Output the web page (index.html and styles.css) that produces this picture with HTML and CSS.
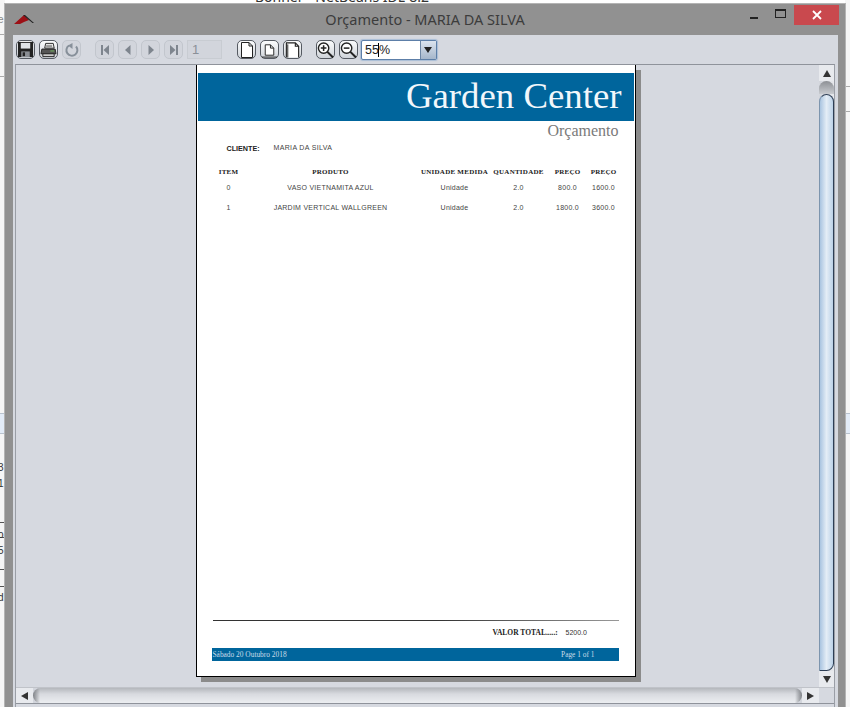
FILE: index.html
```html
<!DOCTYPE html>
<html lang="pt">
<head>
  <meta charset="utf-8">
  <title>Orçamento - MARIA DA SILVA</title>
  <link rel="stylesheet" href="styles.css">
</head>
<body>
  <!-- what shows of the IDE behind the dialog -->
  <div class="behind-title">Bonner - NetBeans IDE 8.2</div>
  <div class="strip strip-l"></div>
  <div class="strip strip-r"></div>
  <div class="behind-band behind-band-l"></div>
  <div class="behind-band behind-band-r"></div>
  <div class="line line-l l34"></div>
  <div class="line line-l l76"></div>
  <div class="line line-l l522"></div>
  <div class="line line-l l537"></div>
  <div class="line line-l l569"></div>
  <div class="line line-l l586"></div>
  <div class="line line-r r86"></div>
  <div class="line line-r r111"></div>
  <div class="behind-txt t14">e</div>
  <div class="behind-txt t462">3</div>
  <div class="behind-txt t478">1</div>
  <div class="behind-txt t529">o</div>
  <div class="behind-txt t545">5</div>
  <div class="behind-txt t592">d</div>

  <div class="window">
    <div class="titlebar">
      <svg class="app-icon" width="20" height="12" viewBox="0 0 20 12">
        <path d="M0 11 L10 2 L15 7 L10 9 L6 11 Z" fill="#9c1016"/>
        <path d="M9 2 L11 2 L20 10 L18.500 10 Z" fill="#222"/>
      </svg>
      <div class="win-title">Orçamento - MARIA DA SILVA</div>
      <div class="win-btns">
        <div class="win-btn"><span class="ico-min"></span></div>
        <div class="win-btn"><span class="ico-max"></span></div>
        <div class="win-close">
          <svg width="12" height="12" viewBox="0 0 12 12"><path d="M2 2 L10 10 M10 2 L2 10" stroke="#fff" stroke-width="1.800"/></svg>
        </div>
      </div>
    </div>

    <div class="content">
      <div class="toolbar">
        <div class="tb on">
          <svg width="17" height="17" viewBox="0 0 18 18"><path d="M1 1 H17 V17 H1 Z" fill="#222"/><rect x="4" y="2" width="10" height="6" fill="#dfe2e6"/><rect x="4.500" y="11" width="9" height="6" fill="#8a8e94"/><rect x="6" y="12" width="2.500" height="4" fill="#222"/></svg>
        </div>
        <div class="tb on">
          <svg width="18" height="18" viewBox="0 0 18 18"><path d="M6 2 H14 L15 7 H5 Z" fill="#fff" stroke="#222"/><path d="M6.500 4 H13 M6.500 5.500 H13" stroke="#555" stroke-width=".8"/><path d="M2 8 H16 L17 13 H1 Z" fill="#555" stroke="#222"/><path d="M11 10 H15" stroke="#6a9a5a" stroke-width="1.500"/><path d="M3 13 H15 V16 H3 Z" fill="#ccc" stroke="#222"/></svg>
        </div>
        <div class="tb off">
          <svg width="16" height="16" viewBox="0 0 16 16"><path d="M5 3.500 A5.500 5.500 0 1 0 12 4.500" fill="none" stroke="#87909a" stroke-width="2"/><path d="M8.500 1 V7 L4 3.500 Z" fill="#87909a"/></svg>
        </div>
        <div class="tb off gap-l">
          <svg width="12" height="12" viewBox="0 0 12 12"><path d="M2 1 H4 V11 H2 Z M10 1 V11 L4.500 6 Z" fill="#7e858e"/></svg>
        </div>
        <div class="tb off">
          <svg width="12" height="12" viewBox="0 0 12 12"><path d="M8.500 1 V11 L3 6 Z" fill="#7e858e"/></svg>
        </div>
        <div class="tb off">
          <svg width="12" height="12" viewBox="0 0 12 12"><path d="M3.500 1 V11 L9 6 Z" fill="#7e858e"/></svg>
        </div>
        <div class="tb off">
          <svg width="12" height="12" viewBox="0 0 12 12"><path d="M2 1 V11 L7.500 6 Z M8 1 H10 V11 H8 Z" fill="#7e858e"/></svg>
        </div>
        <div class="page-num">1</div>
        <div class="tb on gap-p">
          <svg width="16" height="18" viewBox="0 0 16 18"><path d="M2.500 1.500 H10 L13.500 5 V16.500 H2.500 Z M10 1.500 V5 H13.500" fill="#fff" stroke="#222"/></svg>
        </div>
        <div class="tb on">
          <svg width="18" height="18" viewBox="0 0 18 18"><path d="M4.500 3.500 H10 L13.500 7 V14.500 H4.500 Z M10 3.500 V7 H13.500" fill="#fff" stroke="#222"/><path d="M1 16.500 H17" stroke="#222"/></svg>
        </div>
        <div class="tb on">
          <svg width="18" height="18" viewBox="0 0 18 18"><path d="M2.500 17 V1.500 H12 L15.500 5 V17 M12 1.500 V5 H15.500" fill="#fff" stroke="#222" stroke-width="1.200"/><path d="M4 17 V3" stroke="#222"/></svg>
        </div>
        <div class="tb on gap-z">
          <svg width="18" height="18" viewBox="0 0 18 18"><circle cx="7" cy="7" r="5.500" fill="#fff" stroke="#222" stroke-width="1.500"/><path d="M4 7 H10 M7 4 V10" stroke="#222" stroke-width="1.600"/><path d="M11 11 L17 17" stroke="#222" stroke-width="2.200"/></svg>
        </div>
        <div class="tb on">
          <svg width="18" height="18" viewBox="0 0 18 18"><circle cx="7" cy="7" r="5.500" fill="#fff" stroke="#222" stroke-width="1.500"/><path d="M4 7 H10" stroke="#222" stroke-width="1.600"/><path d="M11 11 L17 17" stroke="#222" stroke-width="2.200"/></svg>
        </div>
        <div class="zoom-combo">
          <div class="zoom-val">55%</div>
          <div class="zoom-arrow"></div>
        </div>
      </div>

      <div class="viewer">
        <div class="view-row">
          <div class="canvas">
            <div class="page">
              <div class="banner">Garden Center</div>
              <div class="doc-title">Orçamento</div>
              <div class="client">
                <span class="client-lbl">CLIENTE:</span>
                <span class="client-name">MARIA DA SILVA</span>
              </div>
              <div class="grid head">
                <div>ITEM</div><div>PRODUTO</div><div>UNIDADE MEDIDA</div><div>QUANTIDADE</div><div>PREÇO</div><div>PREÇO</div>
              </div>
              <div class="grid row">
                <div>0</div><div>VASO VIETNAMITA AZUL</div><div>Unidade</div><div>2.0</div><div>800.0</div><div>1600.0</div>
              </div>
              <div class="grid row">
                <div>1</div><div>JARDIM VERTICAL WALLGREEN</div><div>Unidade</div><div>2.0</div><div>1800.0</div><div>3600.0</div>
              </div>
              <div class="spacer"></div>
              <div class="total-rule"></div>
              <div class="total">
                <span class="total-lbl">VALOR TOTAL.....:</span>
                <span class="total-val">5200.0</span>
              </div>
              <div class="foot">
                <span>Sábado 20 Outubro 2018</span>
                <span>Page 1 of 1</span>
              </div>
            </div>
          </div>
          <div class="vscroll">
            <div class="arrow-btn"><span class="tri tri-up"></span></div>
            <div class="vtrack"><div class="vthumb"></div></div>
            <div class="arrow-btn"><span class="tri tri-down"></span></div>
          </div>
        </div>
        <div class="hscroll">
          <div class="arrow-btn h"><span class="tri tri-left"></span></div>
          <div class="htrack"><div class="hthumb"></div></div>
          <div class="arrow-btn h"><span class="tri tri-right"></span></div>
          <div class="corner"></div>
        </div>
      </div>
    </div>
  </div>
</body>
</html>
```

FILE: styles.css
```css
html, body {
  margin: 0;
  height: 707px;
  overflow: hidden;
}

body {
  position: relative;
  background: #fff;
  font-family: "Liberation Sans", sans-serif;
}

/* IDE behind */
.behind-title {
  position: absolute;
  top: -11px;
  left: 255px;
  font-family: "Noto Sans", sans-serif;
  font-size: 14px;
  line-height: 15px;
  color: #333;
}
.strip {
  position: absolute;
  top: 0;
  width: 5px;
  height: 707px;
  background: #f6f6f6;
}
.strip-l { left: 0; }
.strip-r { right: 0; }
.behind-band {
  position: absolute;
  top: 413px;
  height: 19px;
  width: 5px;
  background: #e3ecf8;
  border-top: 1px solid #b9c3cf;
  border-bottom: 1px solid #b9c3cf;
}
.behind-band-l { left: 0; }
.behind-band-r { right: 0; }
.line {
  position: absolute;
  width: 5px;
  height: 1px;
  background: #555;
}
.line-l { left: 0; }
.line-r { right: 0; background: #aaa; }
.l34 { top: 34px; background: #aaa; }
.l76 { top: 76px; background: #aaa; }
.l522 { top: 522px; }
.l537 { top: 537px; }
.l569 { top: 569px; }
.l586 { top: 586px; }
.r86 { top: 86px; }
.r111 { top: 111px; }
.behind-txt {
  position: absolute;
  left: 0;
  width: 5px;
  overflow: hidden;
  font-size: 10px;
  line-height: 12px;
  color: #333;
  text-indent: -2px;
}
.t14 { top: 14px; color: #888; }
.t462 { top: 462px; }
.t478 { top: 478px; }
.t529 { top: 529px; }
.t545 { top: 545px; }
.t592 { top: 592px; }

/* dialog */
.window {
  position: absolute;
  left: 5px;
  top: 4px;
  width: 840px;
  height: 703px;
  display: flex;
  flex-direction: column;
  background: #919191;
  box-shadow: 0 0 0 1px #b4b4b4;
}

.titlebar {
  position: relative;
  height: 31px;
  flex: none;
}
.app-icon {
  position: absolute;
  left: 9px;
  top: 9px;
}
.win-title {
  text-align: center;
  font-family: "Noto Sans", sans-serif;
  font-size: 14.500px;
  line-height: 31px;
  color: #3c3c3c;
}
.win-btns {
  position: absolute;
  right: 6px;
  top: 1px;
  display: flex;
}
.win-btn {
  width: 27px;
  height: 20px;
  display: flex;
  align-items: center;
  justify-content: center;
}
.ico-min {
  width: 8px;
  height: 2px;
  margin-top: 5px;
  background: #222;
}
.ico-max {
  width: 9px;
  height: 6px;
  margin-top: -4px;
  border: 1px solid #222;
  border-top-width: 2px;
}
.win-close {
  width: 45px;
  height: 20px;
  background: #c9494e;
  display: flex;
  align-items: center;
  justify-content: center;
}

.content {
  flex: 1;
  margin: 0 7px 0 8px;
  background: #d6d9e0;
  display: flex;
  flex-direction: column;
  min-height: 0;
}

.toolbar {
  height: 29px;
  flex: none;
  display: flex;
  align-items: center;
  gap: 4px;
  padding: 0 0 0 3px;
  box-sizing: border-box;
}
.tb {
  width: 19px;
  height: 19px;
  border-radius: 5px;
  box-sizing: border-box;
  display: flex;
  align-items: center;
  justify-content: center;
  flex: none;
}
.tb.on {
  border: 1px solid #555a62;
  background: linear-gradient(#fbfcfd, #cfd3d9);
}
.tb.off {
  border: 1px solid #c2c6cd;
  background: #d2d5dc;
}
.gap-l { margin-left: 10px; }
.gap-p { margin-left: 11px; }
.gap-z { margin-left: 10px; }
.page-num {
  width: 35px;
  height: 19px;
  box-sizing: border-box;
  padding-left: 4px;
  background: #d2d5dc;
  border: 1px solid #c8ccd2;
  font-size: 13px;
  line-height: 18px;
  color: #8a9098;
  flex: none;
}
.zoom-combo {
  width: 76px;
  height: 20px;
  margin-left: -1px;
  display: flex;
  box-sizing: border-box;
  border: 1px solid #5d7fa8;
  border-radius: 2px;
  background: #fff;
  box-shadow: 0 0 1px 1px #a9bdd6;
  flex: none;
}
.zoom-val {
  flex: 1;
  position: relative;
  padding-left: 3px;
  font-size: 12.500px;
  line-height: 18px;
  color: #222;
}
.zoom-val::after {
  content: "";
  position: absolute;
  left: 16px;
  top: 2px;
  width: 1px;
  height: 14px;
  background: #000;
}
.zoom-arrow {
  width: 15px;
  position: relative;
  background: linear-gradient(#dbe3ee, #a5b6cb);
  border-left: 1px solid #6d86a5;
}
.zoom-arrow::after {
  content: "";
  position: absolute;
  left: 3px;
  top: 6px;
  border-left: 4px solid transparent;
  border-right: 4px solid transparent;
  border-top: 6px solid #222;
}

.viewer {
  flex: 1;
  margin: 0 3px 0 2px;
  border-top: 1px solid #8f939b;
  border-left: 1px solid #9a9ea6;
  border-right: 1px solid #9a9ea6;
  display: flex;
  flex-direction: column;
  min-height: 0;
}
.view-row {
  height: 622px;
  flex: none;
  display: flex;
}
.canvas {
  flex: 1;
  overflow: hidden;
  display: flex;
  justify-content: center;
}

.page {
  width: 440px;
  height: 612px;
  margin: 0 0 0 -4px;
  flex: none;
  box-sizing: border-box;
  background: #fff;
  border: 1px solid #000;
  border-top: none;
  box-shadow: 5px 5px 0 #8b8b8b;
  display: flex;
  flex-direction: column;
  padding: 8px 1px 15px 1px;
}
.banner {
  height: 48px;
  flex: none;
  background: #00659c;
  color: #f2f7fb;
  font-family: "Liberation Serif", serif;
  font-size: 36.800px;
  line-height: 46px;
  text-align: right;
  padding-right: 12px;
}
.doc-title {
  font-family: "Liberation Serif", serif;
  font-size: 16px;
  line-height: 18px;
  margin-top: 1px;
  text-align: right;
  padding-right: 15px;
  color: #7a7a7a;
}
.client {
  display: flex;
  align-items: center;
  height: 10px;
  margin-top: 2px;
  padding-left: 29px;
}
.client-lbl {
  width: 47px;
  font-size: 7.200px;
  font-weight: bold;
  color: #222;
  padding-top: 2px;
}
.client-name {
  font-size: 7px;
  letter-spacing: .35px;
  color: #444;
}

.grid {
  display: grid;
  grid-template-columns: 32px 172px 76px 52px 46px 26px;
  padding-left: 15px;
  white-space: nowrap;
  justify-items: center;
}
.head {
  margin-top: 15px;
  height: 10px;
  line-height: 10px;
  font-family: "Liberation Serif", serif;
  font-weight: bold;
  font-size: 7px;
  letter-spacing: .25px;
  color: #222;
}
.row {
  margin-top: 4px;
  height: 14px;
  line-height: 14px;
  font-size: 7px;
  letter-spacing: .25px;
  color: #444;
}
.row + .row { margin-top: 6px; }

.spacer { flex: 1; }
.total-rule {
  height: 1px;
  margin: 0 15px;
  background: linear-gradient(90deg, #333 55%, #999);
}
.total {
  display: flex;
  align-items: center;
  height: 10px;
  margin-top: 6px;
  padding-left: 295px;
}
.total-lbl {
  width: 73px;
  font-family: "Liberation Serif", serif;
  font-weight: bold;
  font-size: 7.500px;
  color: #222;
  white-space: nowrap;
}
.total-val {
  font-size: 7px;
  color: #333;
}
.foot {
  height: 13px;
  margin: 11px 15px 0 14px;
  background: #00659c;
  display: flex;
  justify-content: space-between;
  padding: 0 24px 0 1px;
  font-family: "Liberation Serif", serif;
  font-size: 7.400px;
  line-height: 14px;
  color: #c9dce8;
}

/* scrollbars */
.vscroll {
  width: 15px;
  flex: none;
  display: flex;
  flex-direction: column;
  background: #e4e6ea;
}
.vtrack {
  flex: 1;
  position: relative;
  background: linear-gradient(90deg, #d2d5dc, #e6e8ec);
}
.vthumb {
  position: absolute;
  left: 0;
  right: 0;
  top: 13px;
  bottom: 0;
  box-sizing: border-box;
  border: 1px solid #2d3e55;
  border-left-color: #7d95ae;
  border-radius: 10px 10px 10px 0;
  background: linear-gradient(90deg, #a9c4e0, #e4edf6 50%, #bcd2e8);
}
.vthumb::before {
  content: "";
  position: absolute;
  left: -1px;
  right: -1px;
  top: -14px;
  height: 13px;
  background: linear-gradient(#8d9095, #c8cbd0);
  border-radius: 8px 8px 0 0;
}
.arrow-btn {
  height: 16px;
  flex: none;
  display: flex;
  align-items: center;
  justify-content: center;
  background: #e8eaee;
}
.arrow-btn.h {
  width: 17px;
  height: 15px;
}
.tri {
  width: 0;
  height: 0;
}
.tri-up {
  border-left: 4px solid transparent;
  border-right: 4px solid transparent;
  border-bottom: 7px solid #333;
}
.tri-down {
  border-left: 4px solid transparent;
  border-right: 4px solid transparent;
  border-top: 7px solid #333;
}
.tri-left {
  border-top: 4px solid transparent;
  border-bottom: 4px solid transparent;
  border-right: 7px solid #333;
}
.tri-right {
  border-top: 4px solid transparent;
  border-bottom: 4px solid transparent;
  border-left: 7px solid #333;
}
.hscroll {
  height: 15px;
  flex: none;
  display: flex;
  border-bottom: 1px solid #8f939b;
  border-top: 1px solid #c0c3c9;
}
.htrack {
  flex: 1;
  position: relative;
  background: #d2d5dc;
}
.hthumb {
  position: absolute;
  left: 0;
  right: 0;
  top: 0;
  bottom: 0;
  border-radius: 8px;
  background:
    linear-gradient(90deg, #7f8287, transparent 7px, transparent calc(100% - 7px), #7f8287),
    linear-gradient(#b4b7bc, #d8dadf 40%, #eceef1);
}
.corner {
  width: 15px;
  flex: none;
  background: #d6d9e0;
}
```
